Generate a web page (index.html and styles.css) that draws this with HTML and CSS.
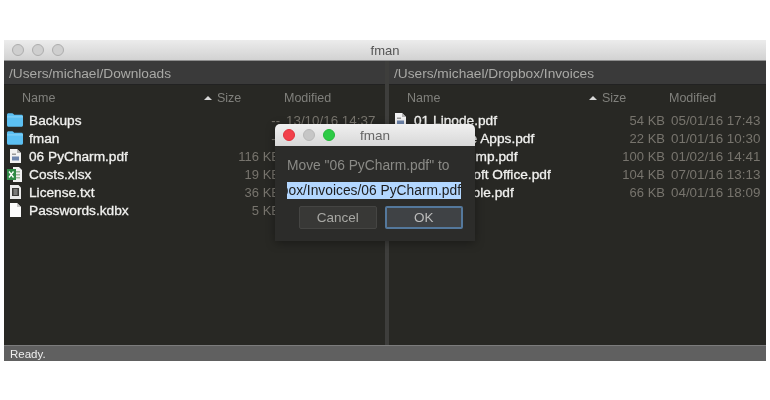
FILE: index.html
```html
<!DOCTYPE html>
<html lang="en">
<head>
<meta charset="utf-8">
<title>fman</title>
<link rel="stylesheet" href="styles.css">
<meta name="viewport" content="width=device-width, initial-scale=1">
</head>
<body>
<svg width="0" height="0" class="defs" aria-hidden="true">
  <defs>
    <symbol id="folder" viewBox="0 0 16 14">
      <path d="M0 1.700C0 .8.700.2 1.500.2h3.700c.6 0 .9.300 1.300.8l.6.8h7.400c.8 0 1.500.7 1.500 1.500v9c0 .9-.7 1.500-1.500 1.500H1.500C.7 13.800 0 13.200 0 12.300z" fill="#5cc0f2"/>
      <rect y="3.400" width="16" height="1" fill="#8cd4f8"/>
    </symbol>
    <symbol id="pdf" viewBox="0 0 11 14">
      <path d="M0 0h7l4 4v10H0z" fill="#f2f2f2"/>
      <path d="M7 0l4 4H7z" fill="#b4b4b4"/>
      <rect x="2" y="7.500" width="7" height="4" fill="#6f86ad"/>
      <rect x="2" y="4.500" width="4" height="1.500" fill="#9a9a9a"/>
    </symbol>
    <symbol id="xlsx" viewBox="0 0 15 15">
      <path d="M6 0h6l3 3v12H6z" fill="#f0f0f0"/>
      <path d="M8 4h5v1.500H8zM8 7h5v1.500H8zM8 10h5v1.500H8z" fill="#9cb89c"/>
      <rect y="2" width="9" height="11" fill="#2f8a45"/>
      <path d="M2 4.500l4.500 6M6.500 4.500L2 10.500" stroke="#fff" stroke-width="1.300" fill="none"/>
    </symbol>
    <symbol id="txt" viewBox="0 0 11 14">
      <path d="M0 0h8.500L11 2.500V14H0z" fill="#eaeaea"/>
      <rect x="2" y="3" width="7" height="8" fill="#3a3a38"/>
      <path d="M3.500 5h4M3.500 7h4M3.500 9h4" stroke="#bbb" stroke-width="1"/>
    </symbol>
    <symbol id="blank" viewBox="0 0 11 14">
      <path d="M0 0h7l4 4v10H0z" fill="#fbfbfb"/>
      <path d="M7 0l4 4H7z" fill="#c8c8c8"/>
    </symbol>
  </defs>
</svg>

<main class="window">
  <header class="titlebar">
    <span class="lights">
      <i class="light"></i><i class="light"></i><i class="light"></i>
    </span>
    <span class="title">fman</span>
  </header>

  <div class="panes">
    <section class="pane left">
      <div class="path">/Users/michael/Downloads</div>
      <div class="row head">
        <span class="head-name">Name</span>
        <span class="head-size"><i class="arrow"></i>Size</span>
        <span class="head-mod">Modified</span>
      </div>
      <div class="row"><svg class="icon ic-folder"><use href="#folder"/></svg><span class="name">Backups</span><span class="size">--</span><span class="date">13/10/16 14:37</span></div>
      <div class="row"><svg class="icon ic-folder"><use href="#folder"/></svg><span class="name">fman</span><span class="size">--</span><span class="date">13/10/16 14:37</span></div>
      <div class="row"><svg class="icon ic-file"><use href="#pdf"/></svg><span class="name">06 PyCharm.pdf</span><span class="size">116 KB</span><span class="date">05/01/16 17:43</span></div>
      <div class="row"><svg class="icon ic-xl"><use href="#xlsx"/></svg><span class="name">Costs.xlsx</span><span class="size">19 KB</span><span class="date">01/01/16 10:30</span></div>
      <div class="row"><svg class="icon ic-file"><use href="#txt"/></svg><span class="name">License.txt</span><span class="size">36 KB</span><span class="date">01/02/16 14:41</span></div>
      <div class="row"><svg class="icon ic-file"><use href="#blank"/></svg><span class="name">Passwords.kdbx</span><span class="size">5 KB</span><span class="date">07/01/16 13:13</span></div>
    </section>

    <section class="pane">
      <div class="path">/Users/michael/Dropbox/Invoices</div>
      <div class="row head">
        <span class="head-name">Name</span>
        <span class="head-size"><i class="arrow"></i>Size</span>
        <span class="head-mod">Modified</span>
      </div>
      <div class="row"><svg class="icon ic-file"><use href="#pdf"/></svg><span class="name">01 Linode.pdf</span><span class="size">54 KB</span><span class="date">05/01/16 17:43</span></div>
      <div class="row"><svg class="icon ic-file"><use href="#pdf"/></svg><span class="name">02 Google Apps.pdf</span><span class="size">22 KB</span><span class="date">01/01/16 10:30</span></div>
      <div class="row"><svg class="icon ic-file"><use href="#pdf"/></svg><span class="name">03 Mailchimp.pdf</span><span class="size">100 KB</span><span class="date">01/02/16 14:41</span></div>
      <div class="row"><svg class="icon ic-file"><use href="#pdf"/></svg><span class="name">04 Microsoft Office.pdf</span><span class="size">104 KB</span><span class="date">07/01/16 13:13</span></div>
      <div class="row"><svg class="icon ic-file"><use href="#pdf"/></svg><span class="name">05 A Sample.pdf</span><span class="size">66 KB</span><span class="date">04/01/16 18:09</span></div>
    </section>
  </div>

  <footer class="status">Ready.</footer>
</main>

<div class="dialog" role="dialog">
  <div class="dlg-bar">
    <span class="lights">
      <i class="light red"></i><i class="light grey"></i><i class="light green"></i>
    </span>
    <span class="dlg-title">fman</span>
  </div>
  <div class="dlg-body">
    <p class="dlg-msg">Move "06 PyCharm.pdf" to</p>
    <div class="dlg-input"><span class="sel">Dropbox/Invoices/06 PyCharm.pdf</span></div>
    <div class="dlg-btns">
      <button class="btn">Cancel</button>
      <button class="btn ok">OK</button>
    </div>
  </div>
</div>
</body>
</html>
```
FILE: styles.css
```css
* { box-sizing: border-box; }
html, body { margin: 0; height: 100%; background: #fff; overflow: hidden; }
body { padding: 40px 4px 39px; font-family: "Liberation Sans", Arial, sans-serif; position: relative; }
.defs { position: absolute; }

.window { height: 321px; display: flex; flex-direction: column; background: #282824; filter: blur(0.4px); }

.titlebar {
  height: 21px; flex: none; display: flex; align-items: center; position: relative;
  background: linear-gradient(#ececec, #d2d2d2); border-bottom: 1px solid #8e8e8e;
}
.title { position: absolute; left: 0; right: 0; text-align: center; font-size: 13px; color: #555; }
.lights { display: flex; gap: 8px; padding-left: 8px; }
.light { width: 12px; height: 12px; border-radius: 50%; background: #cfcfcf; border: 1px solid #adadad; display: block; }
.light.red { background: #f2404a; border-color: #e0323c; }
.light.grey { background: #c6c6c6; border-color: #b8b8b8; }
.light.green { background: #2dcb45; border-color: #25b83a; }

.panes { flex: 1; display: flex; gap: 4px; background: #3e3e3c; min-height: 0; }
.pane { flex: 1; background: #282824; min-width: 0; }
.pane.left { flex: 0 0 381px; }
.path {
  height: 24px; line-height: 25px; padding-left: 5px; font-size: 13.7px; color: #a9a9a6;
  background: #3a3a3a; border-bottom: 1px solid #222; white-space: nowrap;
}

.row { height: 18px; display: grid; grid-template-columns: 25px 197px 54px 6px 1fr; align-items: center; font-size: 13px; white-space: nowrap; }
.row .date { grid-column: 5; color: #77746d; font-size: 13.4px; }
.head { height: 26px; display: flex; color: #80807c; font-size: 12.5px; padding-bottom: 1px; }
.head-name { margin-left: 18px; width: 182px; }
.head-size { display: flex; align-items: center; width: 80px; }
.arrow { width: 0; height: 0; border: 4.5px solid transparent; border-top: 0; border-bottom: 4px solid #d8d8d8; margin-right: 5px; }

.icon { justify-self: start; display: block; }
.ic-folder { width: 16px; height: 14px; margin-left: 3px; }
.ic-file { width: 11px; height: 14px; margin-left: 6px; }
.ic-xl { width: 15px; height: 15px; margin-left: 3px; }

.name { color: #f1f1ef; font-size: 13.7px; -webkit-text-stroke: 0.3px #f1f1ef; }
.size { color: #77746d; text-align: right; }

.status { height: 16px; flex: none; line-height: 16px; padding-left: 6px; font-size: 11.5px; color: #eee; background: #606060; border-top: 1px solid #7c7c7c; }

.dialog {
  position: absolute; left: 275px; top: 124px; width: 200px; height: 117px;
  background: #2c2c2a; border-radius: 5px 5px 0 0; filter: blur(0.4px);
  box-shadow: 0 2px 10px rgba(0,0,0,.35); display: flex; flex-direction: column;
}
.dlg-bar { height: 22px; flex: none; display: flex; align-items: center; position: relative; background: linear-gradient(#f0f0f0, #d8d8d8); border-radius: 5px 5px 0 0; }
.dlg-title { position: absolute; left: 0; right: 0; text-align: center; font-size: 13.5px; color: #666; }
.dlg-body { padding: 12px 12px 0; }
.dlg-msg { margin: 0; font-size: 13.8px; line-height: 16px; color: #8a8a86; white-space: nowrap; }
.dlg-input { margin-top: 8px; height: 17px; overflow: hidden; display: flex; justify-content: flex-end; width: 174px; }
.sel { background: #b3d7ff; color: #1c1c1c; font-size: 13.8px; line-height: 17px; white-space: nowrap; flex: none; }
.dlg-btns { display: flex; gap: 8px; margin-top: 7px; padding-left: 12px; }
.btn { width: 78px; height: 23px; font: 13.5px "Liberation Sans", Arial, sans-serif; color: #a8a8a4; background: #383836; border: 1px solid #454543; border-radius: 2px; padding: 0; }
.btn.ok { width: 79px; border: 2px solid #54789c; color: #bbb; background: #3f4245; }
```
